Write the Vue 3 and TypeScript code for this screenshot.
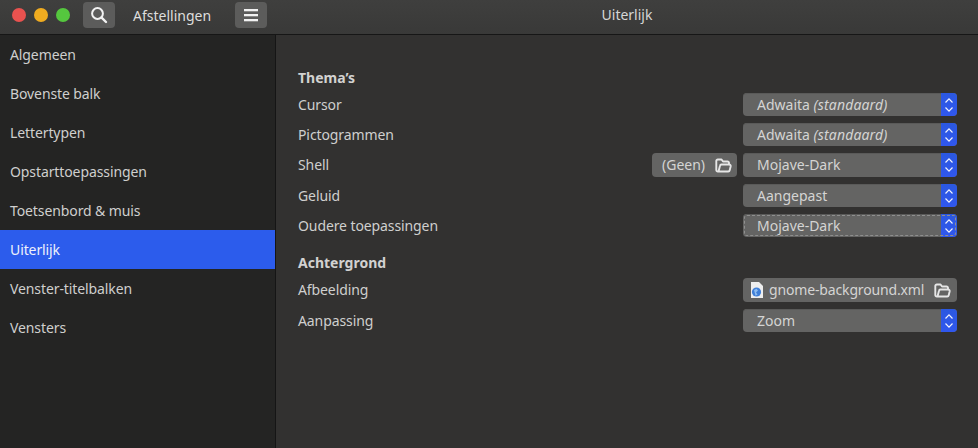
<script setup lang="ts">
const nav: string[] = ['Algemeen', 'Bovenste balk', 'Lettertypen', 'Opstarttoepassingen', 'Toetsenbord & muis', 'Uiterlijk', 'Venster-titelbalken', 'Vensters']
const selected = 'Uiterlijk'
const chevrons = 'M1.5 6.5 5 2.8 8.5 6.5M1.5 11.5 5 15.2 8.5 11.5'
const folder = 'M3.5 13.5H2.8A1.5 1.5 0 0 1 1.3 12V3A1.5 1.5 0 0 1 2.8 1.5H6.5L8 3.5H12.5A1.5 1.5 0 0 1 14 5V6M3.5 13.5 5 7.7A1.5 1.5 0 0 1 6.4 6.5H14.2A1.5 1.5 0 0 1 15.7 8.3L14.7 12.3A1.5 1.5 0 0 1 13.2 13.5Z'
</script>

<template>
  <div class="window">
    <header class="titlebar">
      <div class="tb-left">
        <div class="dots">
          <span class="dot red"></span><span class="dot yellow"></span><span class="dot green"></span>
        </div>
        <button class="tb-btn search-btn">
          <svg width="18" height="18" viewBox="0 0 18 18" fill="none" stroke="#f2f2f2">
            <circle cx="7.5" cy="7.5" r="5.4" stroke-width="2" />
            <path d="M11.6 11.6 16 16" stroke-width="2.4" stroke-linecap="round" />
          </svg>
        </button>
        <span class="app-title">Afstellingen</span>
        <button class="tb-btn menu-btn">
          <svg width="16" height="14" viewBox="0 0 16 14" fill="#f2f2f2">
            <rect x="1" y="1" width="14" height="2.3" /><rect x="1" y="6" width="14" height="2.3" /><rect x="1" y="11" width="14" height="2.3" />
          </svg>
        </button>
      </div>
      <div class="tb-title">Uiterlijk</div>
    </header>
    <div class="body">
      <nav class="sidebar">
        <div v-for="n in nav" :key="n" class="nav-row" :class="{ active: n === selected }">{{ n }}</div>
      </nav>
      <main class="content">
        <h2 class="head first">Thema’s</h2>
        <div class="row r1">
          <span class="label">Cursor</span>
          <div class="combo"><span class="val">Adwaita <em>(standaard)</em></span><span class="spin"><svg width="10" height="18" viewBox="0 0 10 18" fill="none" stroke="#eef1ff" stroke-width="1.2"><path :d="chevrons" /></svg></span></div>
        </div>
        <div class="row r1">
          <span class="label">Pictogrammen</span>
          <div class="combo"><span class="val">Adwaita <em>(standaard)</em></span><span class="spin"><svg width="10" height="18" viewBox="0 0 10 18" fill="none" stroke="#eef1ff" stroke-width="1.2"><path :d="chevrons" /></svg></span></div>
        </div>
        <div class="row r2 lifted">
          <span class="label">Shell</span>
          <div class="file small"><span class="file-name">(Geen)</span>
            <svg class="folder" width="17" height="15" viewBox="0 0 17 15" fill="none" stroke="#e6e6e6" stroke-width="1.9" stroke-linejoin="round"><path :d="folder" /></svg>
          </div>
          <div class="combo tall"><span class="val">Mojave-Dark</span><span class="spin"><svg width="10" height="18" viewBox="0 0 10 18" fill="none" stroke="#eef1ff" stroke-width="1.2"><path :d="chevrons" /></svg></span></div>
        </div>
        <div class="row r1">
          <span class="label">Geluid</span>
          <div class="combo"><span class="val">Aangepast</span><span class="spin"><svg width="10" height="18" viewBox="0 0 10 18" fill="none" stroke="#eef1ff" stroke-width="1.2"><path :d="chevrons" /></svg></span></div>
        </div>
        <div class="row r1">
          <span class="label">Oudere toepassingen</span>
          <div class="combo focused"><span class="val">Mojave-Dark</span><span class="spin"><svg width="10" height="18" viewBox="0 0 10 18" fill="none" stroke="#eef1ff" stroke-width="1.2"><path :d="chevrons" /></svg></span><span class="focus-ring"></span></div>
        </div>
        <h2 class="head second">Achtergrond</h2>
        <div class="row r2 lifted">
          <span class="label">Afbeelding</span>
          <div class="file wide">
            <svg class="doc" width="12" height="16" viewBox="0 0 12 16"><path d="M0 0H8L12 4V16H0Z" fill="#eeeeee" /><circle cx="5.5" cy="10" r="4.6" fill="#3f7fd8" /><path d="M3 8 5.5 6.8 7 8.5 5 10.5 6.5 12.5 4.5 13.8Z" fill="#8fbdf0" /></svg>
            <span class="file-name">gnome-background.xml</span>
            <svg class="folder" width="17" height="15" viewBox="0 0 17 15" fill="none" stroke="#e6e6e6" stroke-width="1.9" stroke-linejoin="round"><path :d="folder" /></svg>
          </div>
        </div>
        <div class="row r1">
          <span class="label">Aanpassing</span>
          <div class="combo"><span class="val">Zoom</span><span class="spin"><svg width="10" height="18" viewBox="0 0 10 18" fill="none" stroke="#eef1ff" stroke-width="1.2"><path :d="chevrons" /></svg></span></div>
        </div>
      </main>
    </div>
  </div>
</template>

<style>
html, body { margin: 0; background: #323130; }
</style>

<style scoped>
.window {
  width: 978px;
  height: 448px;
  display: flex;
  flex-direction: column;
  overflow: hidden;
  font-family: "Noto Sans", sans-serif;
  font-size: 14px;
  color: #cfcfce;
  background: #323130;
}
.titlebar {
  height: 34px;
  flex: none;
  display: flex;
  align-items: flex-start;
  background: linear-gradient(#3f3f3e, #393938);
  border-bottom: 1px solid #161616;
}
.tb-left {
  width: 276px;
  height: 30px;
  flex: none;
  display: flex;
  align-items: center;
}
.dots {
  display: flex;
  gap: 8px;
  margin-left: 12px;
}
.dot { width: 14px; height: 14px; border-radius: 50%; }
.red { background: #e9524f; }
.yellow { background: #f0ac20; }
.green { background: #55c73e; }
.tb-btn {
  width: 32px;
  height: 26px;
  padding: 0;
  border: none;
  border-radius: 4px;
  background: #5c5c5b;
  display: flex;
  align-items: center;
  justify-content: center;
}
.search-btn { margin-left: 13px; }
.app-title {
  width: 102px;
  margin-left: 18px;
  color: #dededd;
  white-space: nowrap;
}
.tb-title {
  flex: 1;
  height: 30px;
  line-height: 30px;
  text-align: center;
  color: #d6d6d5;
}
.body { flex: 1; display: flex; min-height: 0; }
.sidebar {
  width: 275px;
  flex: none;
  background: #242423;
  border-right: 1px solid #151515;
}
.nav-row {
  height: 39px;
  line-height: 39px;
  padding-left: 10px;
  letter-spacing: -0.1px;
  color: #cfcfce;
}
.nav-row.active { background: #2c5cec; color: #eef1fb; }
.content {
  flex: 1;
  padding: 33px 21px 0 22px;
}
.head {
  margin: 0;
  font-size: 14px;
  font-weight: 700;
  line-height: 20px;
  color: #d2d2d1;
}
.head.first { margin-bottom: 5px; }
.head.second { margin-top: 16px; margin-bottom: 5px; }
.row {
  display: flex;
  align-items: center;
  justify-content: flex-end;
  gap: 6px;
  margin-bottom: 7px;
}
.row.r1 { height: 23px; }
.row.r2 { height: 24px; }
.label { margin-right: auto; letter-spacing: -0.1px; }
.lifted .label, .lifted .val, .lifted .file-name { position: relative; top: -1px; }
.combo {
  position: relative;
  width: 214px;
  height: 23px;
  border-radius: 4px;
  background: #646463;
  box-shadow: inset 0 1px 0 #5a5a59;
  display: flex;
  align-items: center;
  overflow: hidden;
}
.combo.tall { height: 24px; }
.val { flex: 1; padding-left: 14px; color: #d4d4d3; white-space: nowrap; }
.val em { font-style: italic; letter-spacing: 0.15px; }
.spin {
  width: 16px;
  align-self: stretch;
  background: linear-gradient(#2b58e0, #3057ee);
  display: flex;
  align-items: center;
  justify-content: center;
}
.focus-ring {
  position: absolute;
  inset: 1px;
  border: 1px dashed #8f8f8e;
  border-radius: 3px;
  pointer-events: none;
}
.file {
  height: 24px;
  border-radius: 4px;
  background: #646463;
  display: flex;
  align-items: center;
  box-sizing: border-box;
  color: #d4d4d3;
  white-space: nowrap;
}
.file.small { width: 85px; padding: 0 5px 0 10px; justify-content: space-between; }
.file.wide { width: 214px; padding: 0 6px 0 8px; }
.doc { flex: none; margin-right: 6px; }
.file.wide .file-name { flex: 1; letter-spacing: -0.15px; }
</style>
